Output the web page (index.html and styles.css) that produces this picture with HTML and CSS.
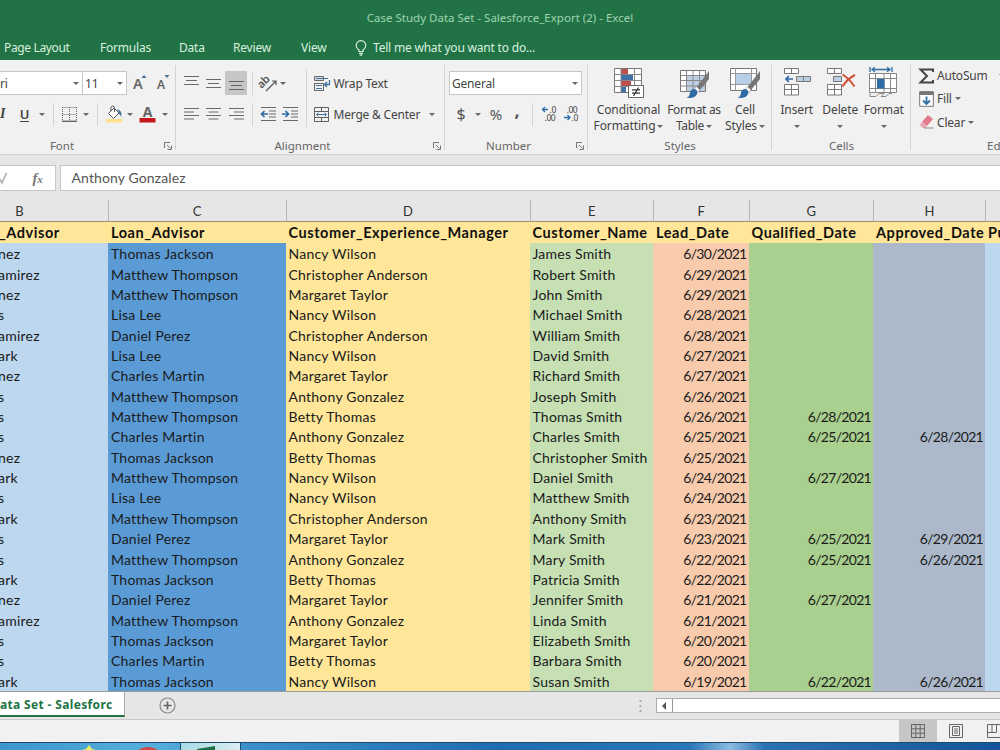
FILE: index.html
```html
<!DOCTYPE html>
<html lang="en">
<head>
  <meta charset="UTF-8">
  <meta name="viewport" content="width=device-width, initial-scale=1.0">
  <title>Case Study Data Set - Salesforce_Export (2) - Excel</title>
  <link rel="stylesheet" href="styles.css">
</head>
<body>
  <div class="title-bar">Case Study Data Set - Salesforce_Export (2) - Excel</div>

  <div class="tabs">
    <span class="tab tab-page">Page Layout</span>
    <span class="tab tab-formulas">Formulas</span>
    <span class="tab tab-data">Data</span>
    <span class="tab tab-review">Review</span>
    <span class="tab tab-view">View</span>
    <svg class="bulb" width="12" height="16" viewBox="0 0 12 16" fill="none" stroke="#d8f0df" stroke-width="1.2"><path d="M4 11.5V10C2 8.600 1.200 7.200 1.200 5.500a4.800 4.800 0 0 1 9.600 0c0 1.700-.8 3.100-2.800 4.500v1.500zM4 13.300h4M4.700 15.200h2.600"/></svg>
    <span class="tab">Tell me what you want to do...</span>
  </div>

  <div class="ribbon">
    <!-- font -->
    <div class="group font-group">
      <div class="row font-row1">
        <div class="box font-name"><span>ri</span><i class="caret"></i></div>
        <div class="box font-size"><span>11</span><i class="caret"></i></div>
        <svg width="15" height="18" viewBox="0 0 15 18"><text class="glyph-a" x="0" y="15" font-size="14.500">A</text><path d="M8.500 4l2.500-3 2.500 3z" fill="#41719c"/></svg>
        <svg width="14" height="18" viewBox="0 0 14 18"><text class="glyph-a" x="0" y="15" font-size="12">A</text><path d="M7.500 1h5l-2.500 3z" fill="#41719c"/></svg>
      </div>
      <div class="row font-row2">
        <span class="italic">I</span>
        <span class="under">U</span>
        <i class="caret"></i>
        <i class="sep"></i>
        <svg width="15" height="15" viewBox="0 0 15 15" fill="none" stroke="#666"><path stroke-dasharray="1 1" d="M.5 .5h14M.5 7.500h14M.5 0v14M7.500 0v14M14.500 0v14"/><path d="M0 14.300h15" stroke-width="1.400"/></svg>
        <i class="caret"></i>
        <i class="sep"></i>
        <svg width="18" height="18" viewBox="0 0 18 18"><path d="M1 14h16v3.500H1z" fill="#ffe08a"/><path d="M3.500 8.500L9 3l5 5-5.500 5.500z" fill="#fff" stroke="#555"/><path d="M6 6V2.500a1.800 1.800 0 0 1 3.500 0V7" fill="none" stroke="#555"/><path d="M12 4.500c3 0 5 2 4.300 7.500-.8-2-1.800-3-3-3.500l1-1z" fill="#41719c"/></svg>
        <i class="caret"></i>
        <svg width="17" height="18" viewBox="0 0 17 18"><text class="glyph-a bold" x="3.700" y="12" font-size="14">A</text><path d="M.5 13h16v4.500H.5z" fill="#c8161d"/></svg>
        <i class="caret"></i>
      </div>
      <div class="label">Font</div>
      <svg class="launcher" width="8" height="8" viewBox="0 0 8 8" fill="none" stroke="#777"><path d="M.5 6V.5H6M3 3l3.500 3.500M7.500 3.500v4h-4"/></svg>
    </div>

    <!-- alignment -->
    <div class="group align-group">
      <div class="row align-row">
        <svg width="15" height="14" viewBox="0 0 15 14" stroke="#6a6a6a"><path d="M0 .5h15M2 4.500h11M0 8.500h15"/></svg>
        <svg width="15" height="14" viewBox="0 0 15 14" stroke="#6a6a6a"><path d="M0 3.500h15M2 7.500h11M0 11.500h15"/></svg>
        <span class="pressed"><svg width="15" height="14" viewBox="0 0 15 14" stroke="#666"><path d="M0 5.500h15M2 9.500h11M0 13.500h15"/></svg></span>
        <i class="sep"></i>
        <span class="orient">
          <svg width="18" height="17" viewBox="0 0 18 17"><text class="glyph-ab" transform="rotate(-45 5 9)" x="-1" y="10">ab</text><path d="M6 16L15.500 6.500M16 10V6h-4" fill="none" stroke="#555" stroke-width="1.200"/></svg>
          <i class="caret"></i>
        </span>
        <i></i>
        <span class="cmd">
          <svg width="17" height="17" viewBox="0 0 17 17" fill="none"><path d="M.5 1.500h9v4h-9z" fill="#d6e0ea" stroke="#666"/><path d="M2 3.500h12M.5 8.500h9v7h-9zM2 10.500h6M2 13.500h6" stroke="#41719c"/><path d="M.5 8.500h9v7h-9z" stroke="#666"/><path d="M15.500 5v4.500H11M13 7l-2.500 2.500L13 12" stroke="#41719c" stroke-width="1.300"/></svg>
          <span>Wrap Text</span>
        </span>
      </div>
      <div class="row align-row">
        <svg width="15" height="12" viewBox="0 0 15 12" stroke="#6a6a6a"><path d="M0 .5h15M0 4h10M0 7.500h15M0 11h10"/></svg>
        <svg width="15" height="12" viewBox="0 0 15 12" stroke="#6a6a6a"><path d="M0 .5h15M2.500 4h10M0 7.500h15M2.500 11h10"/></svg>
        <svg width="15" height="12" viewBox="0 0 15 12" stroke="#6a6a6a"><path d="M0 .5h15M5 4h10M0 7.500h15M5 11h10"/></svg>
        <i class="sep"></i>
        <svg width="17" height="14" viewBox="0 0 17 14" fill="none" stroke="#6a6a6a"><path d="M1 .5h15M9 4h7M9 7h7M9 10h7M1 13.500h15"/><path d="M8 7H1.500M4.500 4L1.500 7l3 3" stroke="#2f6ca5" stroke-width="1.700"/></svg>
        <svg width="17" height="14" viewBox="0 0 17 14" fill="none" stroke="#6a6a6a"><path d="M1 .5h15M9 4h7M9 7h7M9 10h7M1 13.500h15"/><path d="M0 7h6.500M3.500 4l3 3-3 3" stroke="#2f6ca5" stroke-width="1.700"/></svg>
        <i></i>
        <span class="cmd">
          <svg width="17" height="15" viewBox="0 0 17 15" fill="none" stroke="#606060"><path d="M.5 .5h14v14H.5zM.5 4.500h14M.5 10.500h14M7.500 .5v4M7.500 10.500v4"/><path d="M2.500 7.500h10M4.500 5.700L2.500 7.500l2 1.800M10.500 5.700l2 1.800-2 1.800" stroke="#41719c"/></svg>
          <span>Merge &amp; Center</span>
          <i class="caret merge-caret"></i>
        </span>
      </div>
      <i class="sep tall"></i>
      <div class="label">Alignment</div>
      <svg class="launcher" width="8" height="8" viewBox="0 0 8 8" fill="none" stroke="#777"><path d="M.5 6V.5H6M3 3l3.500 3.500M7.500 3.500v4h-4"/></svg>
    </div>

    <!-- number -->
    <div class="group number-group">
      <div class="row">
        <div class="box number-format"><span>General</span><i class="caret"></i></div>
      </div>
      <div class="row number-row">
        <span class="sign">$</span>
        <i class="caret"></i>
        <span class="sign percent">%</span>
        <span class="sign comma">,</span>
        <i class="sep"></i>
        <svg width="16" height="16" viewBox="0 0 16 16"><text class="digits" x="8.500" y="7">.0</text><text class="digits" x="3.500" y="15">.00</text><path d="M7 3.500H1.500M4 1L1.500 3.500 4 6" fill="none" stroke="#2f6ca5" stroke-width="1.300"/></svg>
        <svg width="16" height="16" viewBox="0 0 16 16"><text class="digits" x="3.500" y="7">.00</text><text class="digits" x="8.500" y="15">.0</text><path d="M1 11.500h6M4.500 9L7 11.500 4.500 14" fill="none" stroke="#2f6ca5" stroke-width="1.300"/></svg>
      </div>
      <div class="label">Number</div>
      <svg class="launcher" width="8" height="8" viewBox="0 0 8 8" fill="none" stroke="#777"><path d="M.5 6V.5H6M3 3l3.500 3.500M7.500 3.500v4h-4"/></svg>
    </div>

    <!-- styles -->
    <div class="group styles-group">
      <div class="big-row">
        <div class="big big-cond">
          <svg width="31" height="32" viewBox="0 0 31 32"><path d="M1.500 1.500h27v24h-27z" fill="#fff" stroke="#777"/><path d="M8 2h7v5.500H8zM8 14h10v5.500H8z" fill="#c0504d"/><path d="M8 8h12v5.500H8zM8 20h5v5.500H8z" fill="#4070a8"/><path d="M1.500 7.500h27M1.500 13.500h27M1.500 19.500h27M8 1.500v24M21.500 1.500v24" fill="none" stroke="#888"/><path d="M15.500 18.500h15v12h-15z" fill="#fff" stroke="#666"/><path d="M19 22.800h8M19 26.200h8M25.500 20.500l-5 8.500" fill="none" stroke="#333" stroke-width="1.200"/></svg>
          <span>Conditional</span><span>Formatting<i class="caret"></i></span>
        </div>
        <div class="big big-table">
          <svg width="32" height="32" viewBox="0 0 32 32"><path d="M2.500 3.500h25v21h-25z" fill="#fff" stroke="#777"/><path d="M9 9h18v15H9z" fill="#bdd0e6"/><path d="M2.500 8.500h25M2.500 13.500h25M2.500 19h25M8.500 3.500v21M15 3.500v21M21.500 3.500v21" fill="none" stroke="#888"/><path d="M31 4v8l-9 11-3.500-3z" fill="#777"/><path d="M18.500 19.500l3.500 3.500-2 2.500-3.500-3.500z" fill="#fff" stroke="#888" stroke-width=".6"/><path d="M16 22c3 .5 4 2.500 3 5-1.500 4-6.500 4.500-10.500 3.500 3-1 3-2.500 3.500-5 .5-2 2-3.500 4-3.500z" fill="#2f6ca5"/></svg>
          <span>Format as</span><span>Table<i class="caret"></i></span>
        </div>
        <div class="big big-cell">
          <svg width="32" height="32" viewBox="0 0 32 32"><path d="M1.500 1.500h26v22h-26z" fill="#fff" stroke="#777"/><path d="M1.500 6.500h26M1.500 17.500h26M6.500 1.500v22M22.500 1.500v22" fill="none" stroke="#999"/><path d="M7 7h15v10H7z" fill="#b8cfe8"/><path d="M31 4v8l-9 11-3.500-3z" fill="#777"/><path d="M18.500 19.500l3.500 3.500-2 2.500-3.500-3.500z" fill="#fff" stroke="#888" stroke-width=".6"/><path d="M16 22c3 .5 4 2.500 3 5-1.500 4-6.500 4.500-10.500 3.500 3-1 3-2.500 3.500-5 .5-2 2-3.500 4-3.500z" fill="#2f6ca5"/></svg>
          <span>Cell</span><span>Styles<i class="caret"></i></span>
        </div>
      </div>
      <div class="label">Styles</div>
    </div>

    <!-- cells -->
    <div class="group cells-group">
      <div class="big-row">
        <div class="big">
          <svg width="30" height="32" viewBox="0 0 30 32" fill="#fff" stroke="#777"><path d="M2.500 1.500h14v5h-14zM9.500 1.500v5M2.500 17.500h14v10.500h-14zM9.500 17.500v10.500M2.500 22.500h14"/><path d="M14.500 9.500h14v5h-14zM21.500 9.500v5" fill="#bdd0e6"/><path d="M11 12H4.500M7 9l-3 3 3 3" fill="none" stroke="#2f6ca5" stroke-width="1.700"/></svg>
          <span>Insert</span><i class="caret"></i>
        </div>
        <div class="big">
          <svg width="31" height="32" viewBox="0 0 31 32" fill="#fff" stroke="#777"><path d="M2.500 1.500h14v5h-14zM9.500 1.500v5M2.500 17.500h14v10.500h-14zM9.500 17.500v10.500M2.500 22.500h14"/><path d="M8.500 9.500h8v5h-8z" fill="#bdd0e6"/><path d="M17.500 7.500c5 3 9 7.500 12 12M30 8c-5 2.500-9.500 6.500-12.500 11.500" fill="none" stroke="#cf5133" stroke-width="2"/></svg>
          <span>Delete</span><i class="caret"></i>
        </div>
        <div class="big">
          <svg width="31" height="32" viewBox="0 0 31 32" fill="none" stroke="#888"><path d="M1.500 6.500h27v19h-27z" fill="#fff"/><path d="M1.500 11.500h27M1.500 21.500h27M7.500 6.500v19M22.500 6.500v19M16 6.500v19M2 26v3.500h6l3-3h5l-3 3h5l3-3h3"/><path d="M9 12h7.500v9.500H9z" fill="#2f6ca5" stroke="none"/><path d="M2 0v5M24 0v5M3.500 2.500h19M7 .3L4 2.500 7 4.800M19 .3l3 2.200-3 2.300" stroke="#2f6ca5" stroke-width="1.300"/></svg>
          <span>Format</span><i class="caret"></i>
        </div>
      </div>
      <div class="label">Cells</div>
    </div>

    <!-- editing -->
    <div class="group edit-group">
      <div class="edit-row">
        <svg width="15" height="16" viewBox="0 0 15 16"><path d="M14 4V1.500H1.500L8 8l-6.500 6.500H14V12" fill="none" stroke="#444" stroke-width="2"/></svg>
        <span>AutoSum</span><i class="caret sum-caret"></i>
      </div>
      <div class="edit-row">
        <svg width="15" height="16" viewBox="0 0 15 16"><path d="M.7 .7h13.600v14.600H.7z" fill="#fff" stroke="#777"/><path d="M.5 .5h14v3.500H.5z" fill="#777"/><path d="M7.500 5.500v7.500M4 9.500L7.500 13 11 9.500" fill="none" stroke="#2f6ca5" stroke-width="1.800"/></svg>
        <span>Fill</span><i class="caret"></i>
      </div>
      <div class="edit-row">
        <svg width="15" height="14" viewBox="0 0 15 14"><path d="M9 0l5 4-6 7-5-4z" fill="#e2798f"/><path d="M3 7L.5 10l3 3h3L8 11z" fill="#eaa9b7"/><path d="M5 13h9.500" stroke="#888"/></svg>
        <span>Clear</span><i class="caret"></i>
      </div>
      <div class="label">Editing</div>
    </div>
  </div>

  <div class="formula-bar">
    <div class="fx-box">
      <svg width="10" height="12" viewBox="0 0 10 12"><path d="M0 7l2 4L6.500 1" fill="none" stroke="#b5b5b5" stroke-width="1.700"/></svg>
      <span class="fx">f<small>x</small></span>
    </div>
    <div class="formula">Anthony Gonzalez</div>
  </div>

  <div class="sheet">
    <table class="grid">
      <colgroup>
        <col class="w-b"><col class="w-c"><col class="w-d"><col class="w-e"><col class="w-f"><col class="w-g"><col class="w-h"><col class="w-i">
      </colgroup>
      <thead>
        <tr class="letters"><th>B</th><th>C</th><th>D</th><th>E</th><th>F</th><th>G</th><th>H</th><th></th></tr>
        <tr class="names"><th>_Advisor</th><th>Loan_Advisor</th><th>Customer_Experience_Manager</th><th>Customer_Name</th><th>Lead_Date</th><th>Qualified_Date</th><th>Approved_Date</th><th>Pu</th></tr>
      </thead>
      <tbody id="rows"></tbody>
    </table>
  </div>

  <div class="sheet-tabs">
    <div class="sheet-tab">ata Set - Salesforc</div>
    <svg class="add" width="17" height="17" viewBox="0 0 17 17" fill="none" stroke="#888"><circle cx="8.500" cy="8.500" r="7.500" stroke-width="1.200"/><path d="M8.500 4.500v8M4.500 8.500h8" stroke="#666" stroke-width="1.600"/></svg>
    <svg class="dots" width="3" height="12" viewBox="0 0 3 12" fill="#aaa"><path d="M.5 0h2v2h-2zM.5 5h2v2h-2zM.5 10h2v2h-2z"/></svg>
    <div class="scroll"><span class="scroll-left"></span></div>
  </div>

  <div class="status-bar">
    <span class="view active"><svg width="14" height="14" viewBox="0 0 14 14" fill="none" stroke="#666"><path d="M.5 .5h13v13H.5zM.5 4.800h13M.5 9.200h13M4.800 .5v13M9.200 .5v13"/></svg></span>
    <span class="view"><svg width="14" height="14" viewBox="0 0 14 14" fill="none" stroke="#666"><path d="M.5 .5h13v13H.5zM3.500 2.500h7v9h-7zM5 5h4M5 7h4M5 9h4"/></svg></span>
    <span class="view"><svg width="14" height="14" viewBox="0 0 14 14" fill="none" stroke="#666"><path d="M.5 .5h13v13H.5zM.5 8.500h9v-8M5 .5v8"/></svg></span>
  </div>

  <div class="taskbar">
    <svg class="task-star" width="14" height="5" viewBox="0 0 14 5"><path d="M7 0l3 4 4 1H0l4-1z" fill="#e9ef6a"/></svg>
    <svg class="task-chrome" width="20" height="3" viewBox="0 0 20 3"><path d="M0 3Q10-3 20 3z" fill="#d6474a"/></svg>
    <div class="task-excel"><svg width="20" height="5" viewBox="0 0 20 5"><path d="M0 3L18 0v5H0z" fill="#1f7246"/></svg></div>
  </div>

  <script>
const rows = [
  ['nez', 'Thomas Jackson', 'Nancy Wilson', 'James Smith', '6/30/2021', '', ''],
  ['amirez', 'Matthew Thompson', 'Christopher Anderson', 'Robert Smith', '6/29/2021', '', ''],
  ['nez', 'Matthew Thompson', 'Margaret Taylor', 'John Smith', '6/29/2021', '', ''],
  ['s', 'Lisa Lee', 'Nancy Wilson', 'Michael Smith', '6/28/2021', '', ''],
  ['amirez', 'Daniel Perez', 'Christopher Anderson', 'William Smith', '6/28/2021', '', ''],
  ['ark', 'Lisa Lee', 'Nancy Wilson', 'David Smith', '6/27/2021', '', ''],
  ['nez', 'Charles Martin', 'Margaret Taylor', 'Richard Smith', '6/27/2021', '', ''],
  ['s', 'Matthew Thompson', 'Anthony Gonzalez', 'Joseph Smith', '6/26/2021', '', ''],
  ['s', 'Matthew Thompson', 'Betty Thomas', 'Thomas Smith', '6/26/2021', '6/28/2021', ''],
  ['s', 'Charles Martin', 'Anthony Gonzalez', 'Charles Smith', '6/25/2021', '6/25/2021', '6/28/2021'],
  ['nez', 'Thomas Jackson', 'Betty Thomas', 'Christopher Smith', '6/25/2021', '', ''],
  ['ark', 'Matthew Thompson', 'Nancy Wilson', 'Daniel Smith', '6/24/2021', '6/27/2021', ''],
  ['s', 'Lisa Lee', 'Nancy Wilson', 'Matthew Smith', '6/24/2021', '', ''],
  ['ark', 'Matthew Thompson', 'Christopher Anderson', 'Anthony Smith', '6/23/2021', '', ''],
  ['s', 'Daniel Perez', 'Margaret Taylor', 'Mark Smith', '6/23/2021', '6/25/2021', '6/29/2021'],
  ['s', 'Matthew Thompson', 'Anthony Gonzalez', 'Mary Smith', '6/22/2021', '6/25/2021', '6/26/2021'],
  ['ark', 'Thomas Jackson', 'Betty Thomas', 'Patricia Smith', '6/22/2021', '', ''],
  ['nez', 'Daniel Perez', 'Margaret Taylor', 'Jennifer Smith', '6/21/2021', '6/27/2021', ''],
  ['amirez', 'Matthew Thompson', 'Anthony Gonzalez', 'Linda Smith', '6/21/2021', '', ''],
  ['s', 'Thomas Jackson', 'Margaret Taylor', 'Elizabeth Smith', '6/20/2021', '', ''],
  ['s', 'Charles Martin', 'Betty Thomas', 'Barbara Smith', '6/20/2021', '', ''],
  ['ark', 'Thomas Jackson', 'Nancy Wilson', 'Susan Smith', '6/19/2021', '6/22/2021', '6/26/2021'],
];

const body = document.getElementById('rows');
rows.forEach(row => {
  const tr = document.createElement('tr');
  [...row, ''].forEach((text, i) => {
    const td = document.createElement('td');
    td.className = 'col-' + 'bcdefghi'[i];
    td.textContent = text;
    tr.appendChild(td);
  });
  body.appendChild(tr);
});
  </script>
</body>
</html>
```
FILE: styles.css
```css
* {
  margin: 0;
  padding: 0;
  box-sizing: border-box;
}

body {
  width: 1000px;
  height: 750px;
  overflow: hidden;
  display: flex;
  flex-direction: column;
  background: #e6e6e6;
  color: #444;
  font-family: "Noto Sans", "Open Sans", sans-serif;
  font-size: 12px;
  letter-spacing: -0.2px;
  white-space: nowrap;
}

svg {
  display: block;
  flex: none;
  overflow: visible;
}

.title-bar {
  height: 36px;
  line-height: 36px;
  background: #217346;
  color: #9fd3b0;
  text-align: center;
  font-size: 11.5px;
  letter-spacing: 0;
}

.tabs {
  height: 24px;
  display: flex;
  align-items: center;
  background: #217346;
  color: #d8f0df;
  padding-left: 4px;
}

.tab {
  line-height: 24px;
}

.tab-page { width: 96px; letter-spacing: -0.35px; }
.tab-formulas { width: 79px; }
.tab-data { width: 54px; }
.tab-review { width: 68px; }
.tab-view { width: 54px; }

.bulb {
  margin-right: 6px;
}

.ribbon {
  height: 95px;
  display: flex;
  background: #f1f1f1;
  border-bottom: 1px solid #d2d2d2;
  overflow: hidden;
}

.group {
  position: relative;
  flex: none;
  padding-top: 11px;
}

.group::after {
  content: "";
  position: absolute;
  right: 0;
  top: 5px;
  bottom: 4px;
  width: 1px;
  background: #d4d4d4;
}

.font-group { width: 176px; }
.align-group { width: 269px; padding-left: 4px; }
.number-group { width: 143px; padding-left: 4px; }
.styles-group { width: 184px; }
.cells-group { width: 139px; }

.row {
  height: 24px;
  margin-bottom: 7px;
  display: flex;
  align-items: center;
}

.label {
  position: absolute;
  left: 0;
  right: 16px;
  bottom: 0;
  height: 16px;
  line-height: 16px;
  text-align: center;
  color: #666;
  font-size: 11.5px;
  letter-spacing: 0;
}

.font-group .label { right: 52px; }
.styles-group .label,
.cells-group .label { right: 0; }
.edit-group .label { left: 76px; right: auto; }

.launcher {
  position: absolute;
  right: 4px;
  bottom: 4px;
}

.caret {
  display: inline-block;
  flex: none;
  width: 0;
  height: 0;
  border: 3px solid transparent;
  border-top: 3px solid #666;
  border-bottom: 0;
}

.sep {
  flex: none;
  width: 1px;
  height: 23px;
  background: #d4d4d4;
}

.sep.tall {
  position: absolute;
  left: 130px;
  top: 10px;
  height: 57px;
}

.box {
  height: 24px;
  display: flex;
  align-items: center;
  justify-content: space-between;
  background: #fff;
  border: 1px solid #c6c6c6;
  padding: 0 3px 0 2px;
}

.font-name { width: 84px; margin-left: -1px; padding-left: 0; }
.font-size { width: 45px; margin-left: -1px; margin-right: 6px; }
.font-row1 svg + svg { margin-left: 9px; }
.number-format { width: 133px; }

.font-row2 {
  display: grid;
  grid-template-columns: 15px 19px 16px 7px 24px 10px 13px 20px 12px 23px 11px;
  justify-items: center;
}

.italic {
  font: italic bold 14px "Liberation Serif", serif;
  justify-self: start;
}

.under {
  font-size: 13px;
  font-weight: 600;
  border-bottom: 1px solid #444;
  line-height: 14px;
}

.glyph-a {
  font-family: "Noto Sans", sans-serif;
  font-weight: 600;
  fill: #666;
}

.bold { font-weight: bold; }

.glyph-ab {
  font: 600 11px "Noto Sans", sans-serif;
  fill: #555;
}

.digits {
  font: 8.5px "Noto Sans", sans-serif;
  letter-spacing: -0.4px;
  fill: #444;
}

.align-row {
  display: grid;
  grid-template-columns: 22.5px 22.5px 22.5px 10px 22px 22px 12px 130px;
  justify-items: center;
}

.pressed {
  width: 22px;
  height: 24px;
  background: #c6c6c6;
  display: grid;
  place-items: center;
}

.orient {
  grid-column: span 2;
  justify-self: start;
  display: flex;
  align-items: center;
  gap: 2px;
  margin-left: 2px;
}

/* the orient cell spans two tracks, so the row has one spare at the end */
.cmd {
  justify-self: start;
  display: flex;
  align-items: center;
  gap: 3px;
}

.merge-caret { margin-left: 6px; }

.number-row {
  display: grid;
  grid-template-columns: 24px 9px 28px 14px 17px 15px 30px;
  justify-items: center;
}

.sign { font-size: 16px; line-height: 24px; color: #555; }
.percent { font-size: 15px; }
.comma { font-weight: bold; font-size: 18px; margin-top: -9px; }

.big-row {
  display: flex;
  margin-top: -4px;
}

.styles-group .big-row { padding-left: 5px; }
.cells-group .big-row { padding-left: 3px; }

.big {
  width: 43.5px;
  display: flex;
  flex-direction: column;
  align-items: center;
  letter-spacing: -0.1px;
}

.big-cond { width: 71px; }
.big-table { width: 60px; letter-spacing: -0.3px; }
.big-cell { width: 42px; }

.big span {
  line-height: 16px;
  margin-top: 3px;
}

.big span + span { margin-top: 0; }
.big span .caret { margin: 0 0 2px 2px; }
.big > .caret { margin-top: 7px; }

.edit-group {
  width: 89px;
  padding: 4px 0 0 8px;
}

.edit-group::after { display: none; }

.edit-row {
  height: 23.3px;
  display: flex;
  align-items: center;
  gap: 3px;
}

.sum-caret { margin-left: 8px; }

.formula-bar {
  height: 36px;
  padding-top: 10px;
  display: flex;
  gap: 4px;
}

.fx-box {
  width: 55.5px;
  height: 26px;
  display: flex;
  align-items: center;
  justify-content: space-between;
  padding-right: 12px;
  background: #fff;
  border: 1px solid #c6c6c6;
  border-left: 0;
}

.fx {
  font: italic bold 15px "Liberation Serif", serif;
  color: #777;
}

.fx small { font-size: 11px; }

.formula {
  flex: 1;
  height: 26px;
  line-height: 24px;
  padding-left: 11px;
  background: #fff;
  border: 1px solid #c6c6c6;
  border-right: 0;
  font-family: Lato, sans-serif;
  font-size: 14px;
  letter-spacing: 0.12px;
  color: #555;
}

.sheet {
  height: 501px;
  padding-top: 9px;
  overflow: hidden;
  border-bottom: 1px solid #9b9b9b;
}

.grid {
  width: 1070px;
  margin-left: -70px;
  table-layout: fixed;
  border-collapse: separate;
  border-spacing: 0;
  font-family: Lato, sans-serif;
  font-size: 14px;
  letter-spacing: 0.22px;
  font-variant-ligatures: none;
  color: #1a1a1a;
}

.w-b { width: 178px; }
.w-c { width: 177.5px; }
.w-d { width: 244px; }
.w-e { width: 123.5px; }
.w-f { width: 95.5px; }
.w-g { width: 124.5px; }
.w-h { width: 112px; }
.w-i { width: 15px; }

.letters th {
  height: 22px;
  padding-top: 1px;
  font-weight: normal;
  font-size: 13px;
  color: #333;
  border-left: 1px solid #b5b5b5;
  border-bottom: 1px solid #9b8f70;
}

.names th {
  height: 21px;
  line-height: 20px;
  padding-left: 3px;
  text-align: left;
  font-size: 14.5px;
  letter-spacing: 0.55px;
  background: #ffe699;
  color: #111;
}

.names th:first-child { padding-left: 69px; }

.grid td {
  height: 20.36px;
  line-height: 18px;
  padding: 2px 2px 0 3px;
}

.grid .col-b { background: #bdd7ee; padding-left: 68px; }
.col-c { background: #5b9bd5; }
.col-d { background: #ffe699; }
.col-e { background: #c6e0b4; }
.col-f { background: #f8cbad; }
.col-g { background: #a9d08e; }
.col-h { background: #acb9ca; }
.col-i { background: #bdd7ee; }

.col-f, .col-g, .col-h {
  text-align: right;
  letter-spacing: -0.7px;
}

.sheet-tabs {
  height: 28px;
  display: flex;
  align-items: center;
  border-bottom: 1px solid #c8c8c8;
}

.sheet-tab {
  width: 125px;
  height: 25px;
  align-self: flex-start;
  line-height: 25px;
  background: #fff;
  border-right: 1px solid #aaa;
  border-bottom: 2px solid #217346;
  color: #217346;
  font-weight: bold;
  letter-spacing: 0.35px;
}

.add { margin-left: 34px; }
.dots { margin-left: 463px; }

.scroll {
  flex: 1;
  height: 15px;
  margin-left: 14px;
  background: #fff;
  border: 1px solid #ababab;
  border-right: 0;
}

.scroll-left {
  display: block;
  width: 16px;
  height: 13px;
  padding: 2.5px 0 0 5px;
  border-right: 1px solid #999;
}

.scroll-left::before {
  content: "";
  display: block;
  width: 0;
  border: 4px solid transparent;
  border-right-color: #555;
  border-left: 0;
}

.status-bar {
  height: 22px;
  background: #f1f1f1;
  display: flex;
  justify-content: flex-start;
  padding-left: 899px;
  overflow: hidden;
}

.view {
  flex: none;
  width: 38px;
  height: 22px;
  display: grid;
  place-items: center;
}

.active { background: #c6c6c6; }

.taskbar {
  height: 8px;
  flex: none;
  display: flex;
  align-items: flex-end;
  border-top: 1px solid #1d4a6c;
  background: linear-gradient(90deg, #3a96cc 0, #55b0dc 150px, #3b8fc9 250px, #1e6cb2 500px, #2a76b8 690px, #8bbbe0 730px, #2b72b4 765px, #15549a 1000px);
}

.task-star { margin-left: 82px; }
.task-chrome { margin-left: 42px; }

.task-excel {
  width: 61px;
  height: 8px;
  margin-left: 22px;
  padding: 3px 0 0 16px;
  background: linear-gradient(90deg, #a9dbe5, #d9edf2);
  border: 1px solid #1f4a66;
  border-bottom: 0;
}
```
